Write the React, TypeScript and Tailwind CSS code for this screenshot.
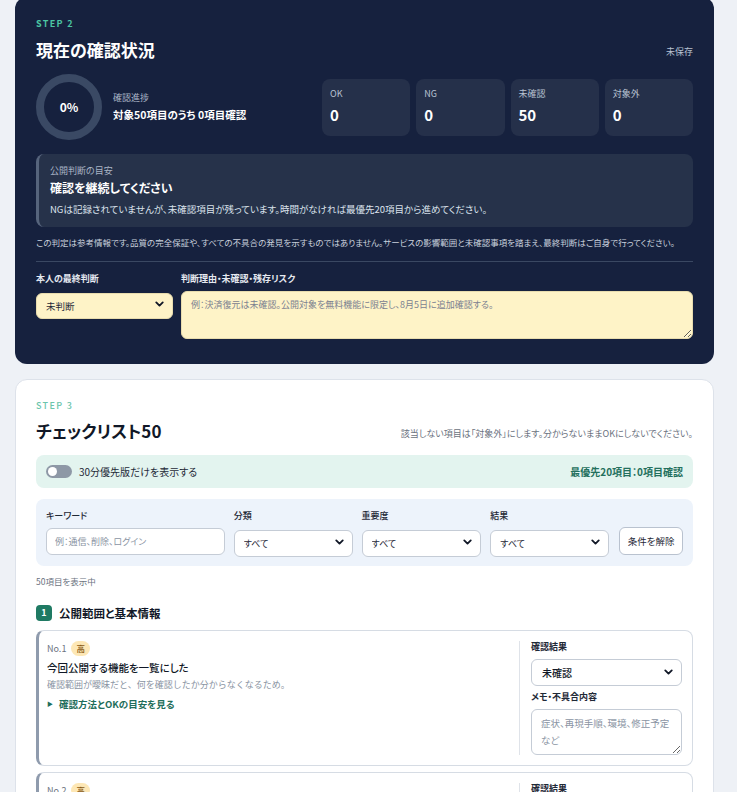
import { ChevronDown } from "lucide-react";

const stats = [
  { label: "OK", value: 0 },
  { label: "NG", value: 0 },
  { label: "未確認", value: 50 },
  { label: "対象外", value: 0 },
];

const filters = [
  { label: "分類", width: "w-[119px]" },
  { label: "重要度", width: "w-[120px]" },
  { label: "結果", width: "w-[119px]" },
];

const items = [
  {
    no: 1,
    level: "高",
    title: "今回公開する機能を一覧にした",
    desc: "確認範囲が曖昧だと、何を確認したか分からなくなるため。",
  },
  {
    no: 2,
    level: "高",
    title: "公開対象外の機能を明記した",
    desc: "対象外の機能が誤って公開されるのを防ぐため。",
  },
];

function SelectBox({
  value,
  className,
  selectClassName,
}: {
  value: string;
  className?: string;
  selectClassName?: string;
}) {
  return (
    <div className={`relative ${className ?? ""}`}>
      <select
        defaultValue={value}
        className={`h-full w-full appearance-none outline-none ${selectClassName ?? ""}`}
      >
        <option>{value}</option>
      </select>
      <ChevronDown
        size={13}
        strokeWidth={3.4}
        className="pointer-events-none absolute right-[7px] top-1/2 -translate-y-1/2 text-[#111827]"
      />
    </div>
  );
}

function ProgressRing({ percent }: { percent: number }) {
  const r = 29;
  const c = 2 * Math.PI * r;
  return (
    <div className="relative h-[66px] w-[66px] shrink-0">
      <svg width="66" height="66" viewBox="0 0 66 66">
        <circle cx="33" cy="33" r={r} fill="none" stroke="#3a4964" strokeWidth="8" />
        <circle
          cx="33"
          cy="33"
          r={r}
          fill="none"
          stroke="#4cc5a2"
          strokeWidth="8"
          strokeDasharray={`${(c * percent) / 100} ${c}`}
          transform="rotate(-90 33 33)"
        />
      </svg>
      <span className="absolute inset-0 flex items-center justify-center text-[12px] font-bold">
        {percent}%
      </span>
    </div>
  );
}

function ChecklistItem({ item }: { item: (typeof items)[number] }) {
  return (
    <div className="flex rounded-lg border border-[#d6dce4] border-l-[3px] border-l-[#8f9bad] bg-white py-[10px]">
      <div className="flex-1 pl-2 pr-3">
        <div className="flex items-center gap-[5px]">
          <span className="text-[9px] leading-[12px] text-[#6b7280]">No.{item.no}</span>
          <span className="flex h-[15px] items-center rounded-full bg-[#fde7b5] px-[5px] text-[8.5px] font-medium text-[#8a5a14]">
            {item.level}
          </span>
        </div>
        <p className="mt-[3px] text-[10.5px] leading-[18px] font-medium text-[#111827]">{item.title}</p>
        <p className="mt-[1px] text-[9px] leading-[13px] text-[#8a94a3] [font-feature-settings:normal]">
          {item.desc}
        </p>
        <button className="mt-[6px] flex items-center gap-[6px] text-[9.5px] leading-[14px] font-bold text-[#1f6e5b]">
          <span className="text-[6px]">▶</span>
          確認方法とOKの目安を見る
        </button>
      </div>
      <div className="w-[173px] shrink-0 border-l border-[#dfe3e9] pl-[11px] pr-[10px]">
        <p className="text-[9px] leading-[12px] font-bold text-[#1f2937]">確認結果</p>
        <SelectBox
          value="未確認"
          className="mt-[5px] h-[27px]"
          selectClassName="rounded-md border border-[#c5ccd6] bg-white px-[10px] text-[10px] font-medium text-[#111827]"
        />
        <p className="mt-[6px] text-[9px] leading-[12px] font-bold text-[#1f2937]">メモ・不具合内容</p>
        <textarea
          placeholder="症状、再現手順、環境、修正予定など"
          className="mt-[6px] block h-[46px] w-full rounded-md border border-[#c5ccd6] px-[9px] py-[5px] text-[9.5px] leading-[17px] outline-none placeholder:text-[#8a94a3]"
        />
      </div>
    </div>
  );
}

export default function App() {
  return (
    <div className="min-h-screen bg-[#eef1f6] pb-8 pl-[15px] pr-[23px] font-['Noto_Sans_CJK_JP','Noto_Sans',sans-serif] text-[#1f2937] [font-feature-settings:'palt']">
      <section className="-mt-[3px] rounded-xl bg-[#16213e] px-[21px] pb-[25px] pt-[21px] text-white">
        <p className="text-[9px] leading-[12px] font-bold tracking-[0.15em] text-[#4cc5a2]">STEP 2</p>
        <div className="mt-[8px] flex items-center justify-between">
          <h2 className="text-[17px] leading-[24px] font-bold">現在の確認状況</h2>
          <span className="mt-[4px] text-[9px] text-[#b8c2d1]">未保存</span>
        </div>

        <div className="mt-[12px] flex items-center">
          <ProgressRing percent={0} />
          <div className="ml-[11px] flex-1">
            <p className="text-[9px] leading-[12px] text-[#aab5c6]">確認進捗</p>
            <p className="mt-[3px] text-[10.5px] leading-[16px] font-bold">対象50項目のうち 0項目確認</p>
          </div>
          <div className="grid w-[371px] grid-cols-4 gap-[6px]">
            {stats.map((s) => (
              <div key={s.label} className="h-[57px] rounded-lg bg-[#25304a] px-[8px] pt-[9px]">
                <p className="text-[9px] leading-[12px] text-[#b8c2d1]">{s.label}</p>
                <p className="mt-[5px] text-[15px] leading-[20px] font-bold">{s.value}</p>
              </div>
            ))}
          </div>
        </div>

        <div className="mt-[14px] rounded-lg border-l-[3px] border-[#56647c] bg-[#26324a] px-[11px] py-[11px]">
          <p className="text-[9px] leading-[12px] text-[#aab5c6]">公開判断の目安</p>
          <p className="mt-[2px] text-[12px] leading-[18px] font-bold">確認を継続してください</p>
          <p className="mt-[5px] text-[9.5px] leading-[14px] text-[#dbe2ec]">
            NGは記録されていませんが、未確認項目が残っています。時間がなければ最優先20項目から進めてください。
          </p>
        </div>

        <p className="mt-[9px] text-[8.5px] leading-[12px] text-[#c9d1dd]">
          この判定は参考情報です。品質の完全保証や、すべての不具合の発見を示すものではありません。サービスの影響範囲と未確認事項を踏まえ、最終判断はご自身で行ってください。
        </p>
        <hr className="mt-[13px] border-t border-[#3a4862]" />

        <div className="mt-[11px] flex gap-[8px]">
          <div className="w-[137px] shrink-0">
            <p className="text-[9px] leading-[12px] font-bold text-[#e5e9f0]">本人の最終判断</p>
            <SelectBox
              value="未判断"
              className="mt-[6px] h-[26px]"
              selectClassName="rounded-md border border-[#e8dcae] bg-[#fef3c7] px-[9px] text-[9.5px] text-[#1f2937]"
            />
          </div>
          <div className="flex-1">
            <p className="text-[9px] leading-[12px] font-bold text-[#e5e9f0]">判断理由・未確認・残存リスク</p>
            <textarea
              placeholder="例：決済復元は未確認。公開対象を無料機能に限定し、8月5日に追加確認する。"
              className="mt-[6px] block h-[48px] w-full rounded-md border border-[#e8dcae] bg-[#fef3c7] px-[9px] py-[6px] text-[9px] leading-[14px] text-[#1f2937] outline-none placeholder:text-[#7b8190]"
            />
          </div>
        </div>
      </section>

      <section className="mt-[15px] rounded-xl border border-[#dde2ea] bg-white px-[20px] pb-6 pt-[20px]">
        <p className="text-[9px] leading-[12px] font-medium tracking-[0.15em] text-[#6cc5ac]">STEP 3</p>
        <div className="mt-[7px] flex items-end justify-between">
          <h2 className="text-[17px] leading-[24px] font-bold text-[#111827]">チェックリスト50</h2>
          <p className="mb-[3px] text-[9px] leading-[12px] text-[#6b7280]">
            該当しない項目は「対象外」にします。分からないままOKにしないでください。
          </p>
        </div>

        <div className="mt-[12px] flex h-[33px] items-center justify-between rounded-lg bg-[#e3f4ef] px-[10px]">
          <label className="flex items-center gap-[7px] text-[10px] text-[#1f2937]">
            <span className="flex h-[13px] w-[26px] items-center rounded-full bg-[#8e98a6] px-[2px]">
              <span className="h-[9px] w-[9px] rounded-full bg-white" />
            </span>
            30分優先版だけを表示する
          </label>
          <span className="text-[10px] font-bold text-[#23705d]">最優先20項目：0項目確認</span>
        </div>

        <div className="mt-[11px] flex items-end gap-[9px] rounded-lg bg-[#edf3fb] px-[10px] py-[11px]">
          <div className="w-[179px]">
            <p className="text-[9px] leading-[12px] font-medium text-[#1f2937]">キーワード</p>
            <input
              placeholder="例：通信、削除、ログイン"
              className="mt-[6px] block h-[27px] w-full rounded-md border border-[#c5ccd6] bg-white px-[8px] text-[9px] outline-none placeholder:text-[#8a94a3]"
            />
          </div>
          {filters.map((f) => (
            <div key={f.label} className={f.width}>
              <p className="text-[9px] leading-[12px] font-medium text-[#1f2937]">{f.label}</p>
              <SelectBox
                value="すべて"
                className="mt-[6px] h-[27px]"
                selectClassName="rounded-md border border-[#c5ccd6] bg-white px-[9px] text-[9px] text-[#1f2937]"
              />
            </div>
          ))}
          <button className="ml-[1px] h-[28px] w-[64px] rounded-md border border-[#b9c2cf] bg-white text-[9.5px] text-[#1f2937]">
            条件を解除
          </button>
        </div>

        <p className="mt-[9px] text-[8.5px] leading-[12px] text-[#6b7280]">50項目を表示中</p>

        <div className="mt-[18px] flex items-center gap-[7px]">
          <span className="flex h-[16px] w-[16px] items-center justify-center rounded-[4px] bg-[#1f7a63] text-[9px] font-bold text-white">
            1
          </span>
          <h3 className="text-[11.5px] leading-[16px] font-bold text-[#111827]">公開範囲と基本情報</h3>
        </div>

        <div className="mt-[9px] flex flex-col gap-[6px]">
          {items.map((item) => (
            <ChecklistItem key={item.no} item={item} />
          ))}
        </div>
      </section>
    </div>
  );
}
